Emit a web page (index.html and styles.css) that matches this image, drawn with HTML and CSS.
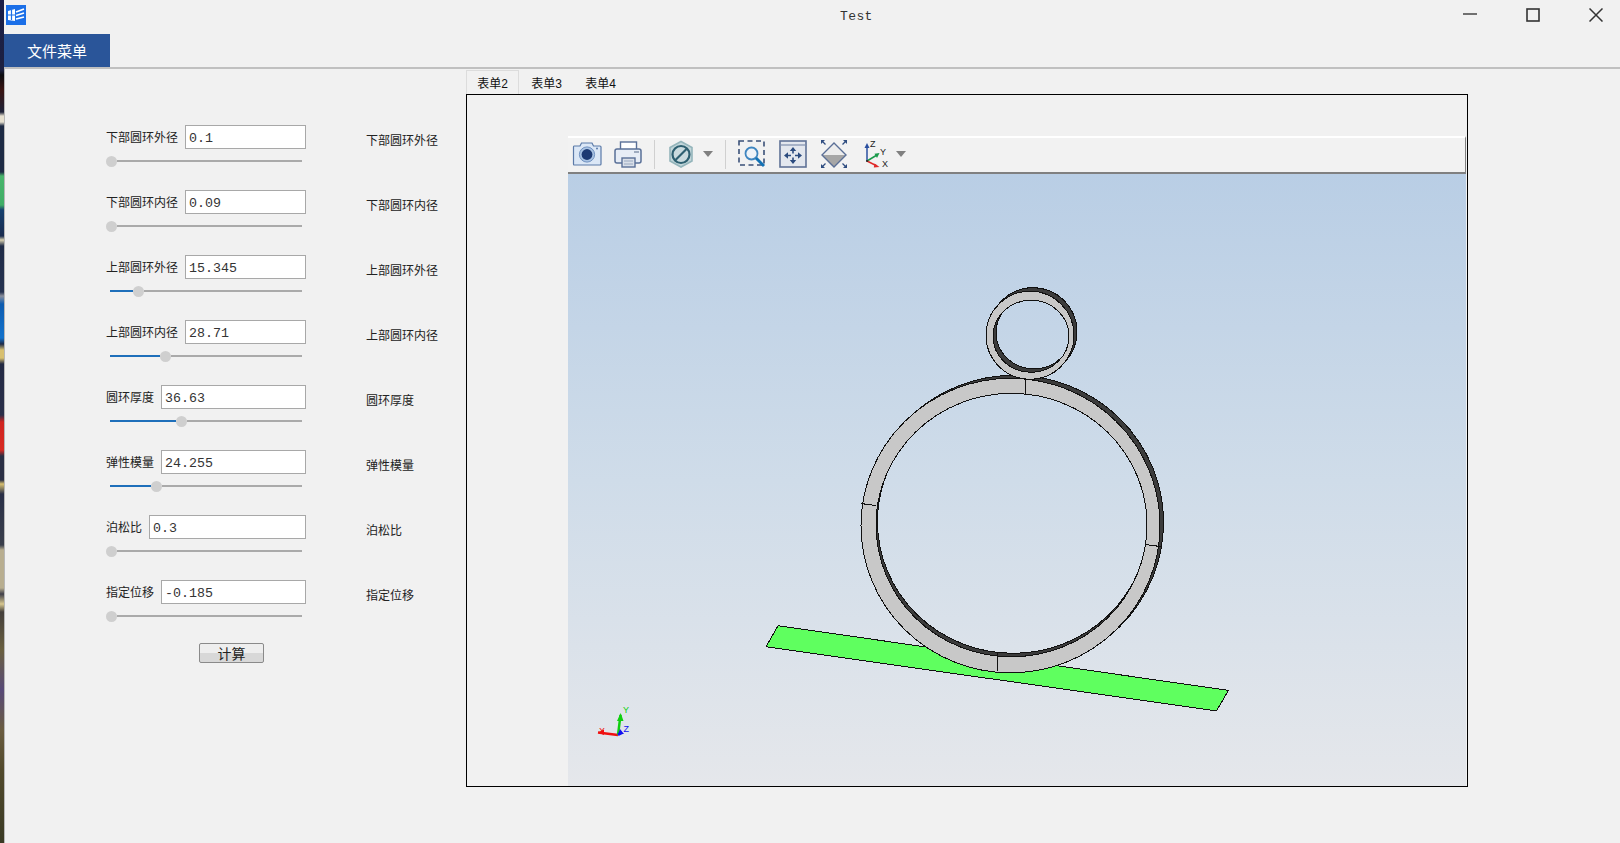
FILE: index.html
```html
<!DOCTYPE html>
<html lang="zh">
<head>
<meta charset="utf-8">
<title>Test</title>
<link rel="stylesheet" href="styles.css">
</head>
<body>
<div class="strip"></div>
<div class="window">
  <header class="titlebar">
    <svg class="app-icon" viewBox="0 0 20 20">
      <rect width="20" height="20" fill="#1b6fe8"/>
      <path d="M2 6 L9 4 L9 16 L2 15 Z" fill="#fff"/>
      <path d="M2 10 H9 M5.5 5 V15" stroke="#1b6fe8" stroke-width="1.2"/>
      <path d="M10 7 L18 4 M10 10.5 L18 8 M10 14 L18 12" stroke="#fff" stroke-width="1.7"/>
    </svg>
    <div class="title">Test</div>
    <div class="controls">
      <svg class="ctl" viewBox="0 0 14 14"><path d="M0 6 H14" stroke="#444" stroke-width="1.5"/></svg>
      <svg class="ctl" viewBox="0 0 14 14"><rect x="1" y="1" width="12" height="12" fill="none" stroke="#333" stroke-width="1.6"/></svg>
      <svg class="ctl" viewBox="0 0 14 14"><path d="M0.5 0.5 L13.5 13.5 M13.5 0.5 L0.5 13.5" stroke="#333" stroke-width="1.5"/></svg>
    </div>
  </header>
  <nav class="menubar"><div class="menu-btn">文件菜单</div></nav>
  <main class="main">
    <section class="form">
      <div class="row">
        <div class="field">
          <div class="line"><label class="lbl">下部圆环外径</label><input class="num" value="0.1"></div>
          <div class="slider"><span class="thumb"></span><span class="rest"></span></div>
        </div>
        <div class="side">下部圆环外径</div>
      </div>
      <div class="row">
        <div class="field">
          <div class="line"><label class="lbl">下部圆环内径</label><input class="num" value="0.09"></div>
          <div class="slider"><span class="thumb"></span><span class="rest"></span></div>
        </div>
        <div class="side">下部圆环内径</div>
      </div>
      <div class="row">
        <div class="field">
          <div class="line"><label class="lbl">上部圆环外径</label><input class="num" value="15.345"></div>
          <div class="slider"><span class="fill" style="width:23px"></span><span class="thumb"></span><span class="rest"></span></div>
        </div>
        <div class="side">上部圆环外径</div>
      </div>
      <div class="row">
        <div class="field">
          <div class="line"><label class="lbl">上部圆环内径</label><input class="num" value="28.71"></div>
          <div class="slider"><span class="fill" style="width:50px"></span><span class="thumb"></span><span class="rest"></span></div>
        </div>
        <div class="side">上部圆环内径</div>
      </div>
      <div class="row">
        <div class="field">
          <div class="line"><label class="lbl">圆环厚度</label><input class="num" value="36.63"></div>
          <div class="slider"><span class="fill" style="width:66px"></span><span class="thumb"></span><span class="rest"></span></div>
        </div>
        <div class="side">圆环厚度</div>
      </div>
      <div class="row">
        <div class="field">
          <div class="line"><label class="lbl">弹性模量</label><input class="num" value="24.255"></div>
          <div class="slider"><span class="fill" style="width:41px"></span><span class="thumb"></span><span class="rest"></span></div>
        </div>
        <div class="side">弹性模量</div>
      </div>
      <div class="row">
        <div class="field">
          <div class="line"><label class="lbl">泊松比</label><input class="num" value="0.3"></div>
          <div class="slider"><span class="thumb"></span><span class="rest"></span></div>
        </div>
        <div class="side">泊松比</div>
      </div>
      <div class="row">
        <div class="field">
          <div class="line"><label class="lbl">指定位移</label><input class="num" value="-0.185"></div>
          <div class="slider"><span class="thumb"></span><span class="rest"></span></div>
        </div>
        <div class="side">指定位移</div>
      </div>
      <button class="calc">计算</button>
    </section>
    <section class="tabs">
      <div class="tabbar">
        <div class="tab active">表单2</div>
        <div class="tab">表单3</div>
        <div class="tab">表单4</div>
      </div>
      <div class="panel">
        <div class="viewer">
          <div class="toolbar">
            <svg class="ico" viewBox="0 0 28 28">
              <path d="M1 6 H7 L8.5 3 H19 L20.5 6 H27 Q28 6 28 7 V24 Q28 25 27 25 H1 Q0.5 25 0.5 24 V7 Q0.5 6 1 6 Z" fill="#dbe7f6" stroke="#5b7aa8" stroke-width="1.2"/>
              <circle cx="14" cy="14.5" r="7.6" fill="#a9c3e3" stroke="#6f90bf"/>
              <circle cx="14" cy="14.5" r="5.4" fill="#1d3a73"/>
              <circle cx="24" cy="8.5" r="1" fill="#5b7aa8"/>
            </svg>
            <svg class="ico" viewBox="0 0 28 28">
              <rect x="6.5" y="2" width="16" height="9" fill="#fff" stroke="#5a7098" stroke-width="1.4"/>
              <rect x="1" y="9" width="26" height="14" rx="2" fill="#e7edf6" stroke="#5a7098" stroke-width="1.5"/>
              <rect x="8" y="18" width="13" height="9" fill="#d9dfe8" stroke="#5a7098" stroke-width="1.4"/>
              <path d="M10 21 H19 M10 24 H19" stroke="#9aa9c0"/>
              <path d="M20 12 H25" stroke="#7f8fa8" stroke-width="1.4"/>
            </svg>
            <span class="sep"></span>
            <svg class="ico" viewBox="0 0 28 28">
              <path d="M14 1.5 L25 7.5 V21 L14 27 L3 21 V7.5 Z" fill="#c2d6da" stroke="#94b5bb" stroke-width="1.6"/>
              <circle cx="14" cy="14.5" r="8.5" fill="#c9dade" stroke="#2d5f70" stroke-width="2.2"/>
              <path d="M8.5 20 L19.5 9" stroke="#2d5f70" stroke-width="2.2"/>
            </svg>
            <svg class="caret" viewBox="0 0 10 6"><path d="M0 0 H10 L5 6 Z" fill="#808080"/></svg>
            <span class="sep"></span>
            <svg class="ico" viewBox="0 0 28 28">
              <rect x="1" y="1" width="25" height="24" fill="none" stroke="#3a5078" stroke-width="1.6" stroke-dasharray="5 3.5"/>
              <circle cx="13.5" cy="13.5" r="6" fill="#eef3f8" stroke="#3f86c0" stroke-width="1.8"/>
              <path d="M18 18 L26 26" stroke="#1272b5" stroke-width="3"/>
            </svg>
            <svg class="ico" viewBox="0 0 28 28">
              <rect x="1" y="1" width="26" height="26" fill="#e3e7ee" stroke="#5f7296" stroke-width="1.6"/>
              <path d="M1 5 H27" stroke="#7f90ad" stroke-width="1.2"/>
              <path d="M14 10 V13.5 M14 17.5 V21 M7 15.5 H12 M16 15.5 H21" stroke="#2b4b7f" stroke-width="1.6"/>
              <path d="M14 7 L10.8 11 H17.2 Z M14 24 L10.8 20 H17.2 Z M5 15.5 L9 12.3 V18.7 Z M23 15.5 L19 12.3 V18.7 Z" fill="#2b4b7f"/>
            </svg>
            <svg class="ico" viewBox="0 0 28 28">
              <path d="M14 3 L26 15 H2 Z" fill="#ececec"/>
              <path d="M2 15 H26 L14 27 Z" fill="#a6a6a6"/>
              <path d="M14 3 L26 15 L14 27 L2 15 Z" fill="none" stroke="#5a6f96" stroke-width="1.4"/>
              <path d="M5.5 4.5 L2.5 1.5 M22.5 4.5 L25.5 1.5 M5.5 23.5 L2.5 26.5 M22.5 23.5 L25.5 26.5" stroke="#2f4d80" stroke-width="1.3"/>
              <path d="M1 0 H5 L1 4 Z M27 0 H23 L27 4 Z M1 28 H5 L1 24 Z M27 28 H23 L27 24 Z" fill="#2f4d80"/>
            </svg>
            <svg class="ico ico-triad" viewBox="0 0 28 28">
              <path d="M8 21 V6" stroke="#2a4fa0" stroke-width="1.5"/>
              <path d="M8 3 L5.5 8 H10.5 Z" fill="#2a4fa0"/>
              <path d="M8 21 L18 15" stroke="#1a9a4a" stroke-width="1.5"/>
              <path d="M20.5 13 L15.5 13.8 L18 18 Z" fill="#1a9a4a"/>
              <path d="M8 21 L18 26" stroke="#e02a2a" stroke-width="1.5"/>
              <path d="M20.5 27 L15.5 23.5 L14.8 27.5 Z" fill="#e02a2a"/>
              <circle cx="8" cy="21" r="1" fill="#222"/>
              <text class="axis" x="11" y="7">Z</text>
              <text class="axis" x="21" y="14.5">Y</text>
              <text class="axis" x="23" y="27">X</text>
            </svg>
            <svg class="caret caret-tight" viewBox="0 0 10 6"><path d="M0 0 H10 L5 6 Z" fill="#808080"/></svg>
          </div>
          <div class="viewport">
            <svg class="scene" viewBox="568 174 898 611" preserveAspectRatio="none">
              <g shape-rendering="crispEdges" stroke="#111" stroke-width="1">
                <polygon points="778,625 1228.5,689.5 1216.5,710 766,646" fill="#5fff5f"/>
                <path fill="#3c3c3c" fill-rule="evenodd" d="M864.5,522 a149.5,147 0 1,0 299,0 a149.5,147 0 1,0 -299,0 Z M877.5,521 a135.5,131.5 0 1,0 271,0 a135.5,131.5 0 1,0 -271,0 Z"/>
                <path fill="#c8c8c8" fill-rule="evenodd" d="M861,525 a149.5,147 0 1,0 299,0 a149.5,147 0 1,0 -299,0 Z M876,524.5 a135.5,131.5 0 1,0 271,0 a135.5,131.5 0 1,0 -271,0 Z"/>
                <path fill="none" d="M1026,379 L1025,394 M861,503 L876,505 M1146,544 L1161,546 M998,652 L997,671"/>
                <path fill="#3c3c3c" fill-rule="evenodd" d="M989,331.5 a44,44 0 1,0 88,0 a44,44 0 1,0 -88,0 Z M996,332.5 a38,36 0 1,0 76,0 a38,36 0 1,0 -76,0 Z"/>
                <path fill="#c8c8c8" fill-rule="evenodd" d="M986,335 a44,44 0 1,0 88,0 a44,44 0 1,0 -88,0 Z M993,336 a38,36 0 1,0 76,0 a38,36 0 1,0 -76,0 Z"/>
              </g>
              <path d="M618 734 L598 731.5" stroke="#f01010" stroke-width="2.5"/>
              <path d="M598 731.5 L604 728.5 V734 Z" fill="#f01010"/>
              <path d="M618 734 L620.5 714" stroke="#10d010" stroke-width="2.5"/>
              <path d="M620.7 712 L617 720 H623.5 Z" fill="#10d010"/>
              <path d="M618 734 L622 732" stroke="#1010f0" stroke-width="2.5"/>
              <path d="M620 728 L624 733 L618 733 Z" fill="#1010f0"/>
              <text class="tri tri-y" x="623" y="712">Y</text>
              <text class="tri tri-x" x="599" y="733">X</text>
              <text class="tri tri-z" x="623.5" y="731">Z</text>
            </svg>
          </div>
        </div>
      </div>
    </section>
  </main>
</div>
</body>
</html>
```

FILE: styles.css
```css
* { box-sizing: border-box; }

html, body { height: 100%; }

body {
  margin: 0;
  height: 843px;
  display: flex;
  overflow: hidden;
  background: #f1f1f1;
  color: #222;
  font-family: "Noto Sans CJK SC", "Liberation Sans", sans-serif;
  font-size: 12px;
}

.strip {
  width: 4px;
  flex: none;
  background: linear-gradient(180deg,
    #1b1f4a 0, #1c2040 70px, #0c0c10 75px, #3a1412 90px, #1d2238 112px, #e6e0d0 116px, #e6e0d0 122px,
    #1d2a44 126px, #1d2a44 172px, #49b56c 176px, #3fae66 205px, #15406e 210px, #1a2c50 236px, #d8d0b0 240px,
    #202c48 246px, #253250 292px, #8a8f9c 296px, #0e5cb0 304px, #1272cc 338px, #1d2a48 344px, #d8c070 350px,
    #d8c070 358px, #232a44 364px, #2a2f4a 415px, #d02420 422px, #d82a22 450px, #2a2f44 456px, #2a2f44 480px,
    #d8c070 484px, #2a3048 494px, #3a3f4c 545px, #b8ae90 550px, #b8ae90 588px, #40404a 594px, #d8c890 604px,
    #45403c 612px, #6a6040 650px, #584a78 690px, #6a5c40 730px, #524a2c 770px, #3a3a24 843px);
}

.window {
  flex: 1;
  min-width: 0;
  display: flex;
  flex-direction: column;
}

/* title bar */
.titlebar {
  height: 34px;
  flex: none;
  display: flex;
  align-items: flex-start;
}

.app-icon {
  width: 20px;
  height: 20px;
  margin: 5px 0 0 2px;
  flex: none;
}

.title {
  margin: 9px 0 0 814px;
  font-family: "Liberation Mono", monospace;
  font-size: 13px;
  line-height: 16px;
  letter-spacing: 0.4px;
  color: #333;
}

.controls {
  margin: 8px 17px 0 auto;
  display: flex;
  gap: 49px;
}

.ctl { width: 14px; height: 14px; display: block; }

/* menu */
.menubar { height: 33px; flex: none; }

.menu-btn {
  width: 106px;
  height: 33px;
  background: #2a5599;
  color: #fff;
  font-size: 15px;
  line-height: 33px;
  padding-left: 23px;
}

/* main */
.main {
  flex: 1;
  min-height: 0;
  display: flex;
  border-top: 2px solid #c0c0c0;
  border-left: 1px solid #b8b8b8;
}

.form {
  width: 461px;
  flex: none;
  padding: 56px 0 0 101px;
}

.row {
  height: 65px;
  display: flex;
  gap: 60px;
}

.field { width: 200px; flex: none; }

.line {
  display: flex;
  align-items: center;
  gap: 7px;
  height: 24px;
}

.lbl {
  flex: none;
  font-size: 12px;
  line-height: 23px;
  align-self: flex-start;
  color: #222;
}

.num {
  flex: 1;
  min-width: 0;
  height: 24px;
  border: 1px solid #a8a8a8;
  border-radius: 0;
  background: #fff;
  padding: 3px 3px 0;
  outline: none;
  color: #333;
  font-family: "Liberation Mono", monospace;
  font-size: 13.3px;
}

.slider {
  width: 196px;
  height: 12px;
  margin-top: 6px;
  display: flex;
  align-items: center;
}

.fill {
  height: 2px;
  margin-left: 4px;
  background: #1e6fba;
  flex: none;
}

.thumb {
  width: 11px;
  height: 11px;
  border-radius: 50%;
  background: #cfcfcf;
  flex: none;
}

.rest {
  flex: 1;
  height: 2px;
  background: #aaa;
}

.side {
  padding-top: 6px;
  line-height: 18px;
  font-size: 12px;
  color: #222;
  white-space: nowrap;
}

.calc {
  display: block;
  width: 65px;
  height: 20px;
  margin: -2px 0 0 93px;
  padding: 0;
  border: 1px solid #8a8a8a;
  border-radius: 2px;
  background: linear-gradient(180deg, #eeeeee 0, #eeeeee 50%, #d8d8d8 50%, #d8d8d8 100%);
  color: #222;
  font-family: "Noto Sans CJK SC", sans-serif;
  font-size: 14px;
  line-height: 16px;
}

/* tabs */
.tabs {
  width: 1002px;
  flex: none;
  padding-top: 1px;
}

.tabbar {
  display: flex;
  height: 24px;
}

.tab {
  width: 53px;
  height: 24px;
  padding-top: 3px;
  text-align: center;
  font-size: 12px;
  line-height: 22px;
  color: #111;
  font-family: "Liberation Sans", "Noto Sans CJK SC", sans-serif;
}

.tab.active {
  border: 1px solid #dcdcdc;
  border-bottom: 0;
  padding-top: 2px;
}

.tab + .tab { width: 55px; }
.tab + .tab + .tab { width: 53px; }

.panel {
  height: 693px;
  border: 1px solid #000;
  padding: 41px 0 0 101px;
}

.viewer {
  width: 898px;
  height: 650px;
  display: flex;
  flex-direction: column;
}

.toolbar {
  height: 38px;
  flex: none;
  display: flex;
  align-items: center;
  gap: 13px;
  padding: 0 0 2px 5px;
  border-top: 2px solid #fff;
  border-right: 1px solid #808080;
  border-bottom: 2px solid #808080;
  background: #f2f2f2;
}

.ico {
  width: 28px;
  height: 28px;
  flex: none;
  overflow: visible;
}

.ico-triad { margin-left: -2px; }

.sep {
  width: 1px;
  height: 29px;
  margin: 0 -1px;
  background: #d0d0d0;
  flex: none;
}

.caret {
  width: 10px;
  height: 6px;
  margin-left: -5px;
  flex: none;
}

.caret-tight { margin-left: -4px; }

.axis {
  font-family: "Liberation Sans", sans-serif;
  font-size: 9px;
  fill: #222;
}

.viewport {
  flex: 1;
  min-height: 0;
  background: linear-gradient(180deg, #b9cee5 0, #cfdce9 50%, #e5e7eb 100%);
}

.scene {
  display: block;
  width: 100%;
  height: 100%;
}

.tri {
  font-family: "Liberation Sans", sans-serif;
  font-size: 9px;
}

.tri-y { fill: #10d010; }
.tri-x { fill: #f01010; }
.tri-z { fill: #1010f0; }
```
